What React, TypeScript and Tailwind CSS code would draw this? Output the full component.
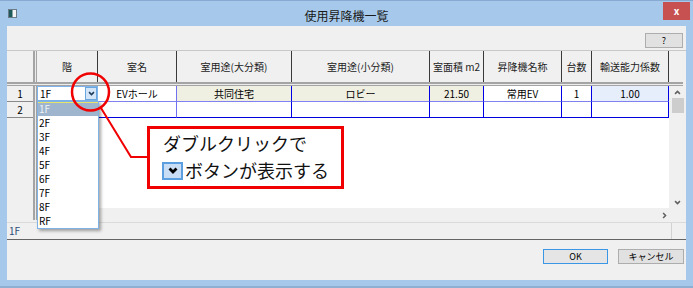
import React from 'react';

const cols = [
  { w: 'w-[61px]', label: '階' },
  { w: 'w-[79px]', label: '室名' },
  { w: 'w-[115px]', label: '室用途(大分類)' },
  { w: 'w-[138px]', label: '室用途(小分類)' },
  { w: 'w-[54px]', label: '室面積 m2' },
  { w: 'w-[78px]', label: '昇降機名称' },
  { w: 'w-[30px]', label: '台数' },
  { w: 'w-[77px]', label: '輸送能力係数' },
];

// row 1 cells after the 階 combo
const row1 = [
  { w: 'w-[79px]', text: 'EVホール', bg: 'bg-white', line: 'border-[#7070f0]' },
  { w: 'w-[115px]', text: '共同住宅', bg: 'bg-[#efefe2]', line: 'border-[#0000e6]' },
  { w: 'w-[138px]', text: 'ロビー', bg: 'bg-[#efefe2]', line: 'border-[#0000e6]' },
  { w: 'w-[54px]', text: '21.50', bg: 'bg-[#efefe2]', line: 'border-[#0000e6]' },
  { w: 'w-[78px]', text: '常用EV', bg: 'bg-white', line: 'border-[#0000e6]' },
  { w: 'w-[30px]', text: '1', bg: 'bg-white', line: 'border-[#0000e6]' },
  { w: 'w-[77px]', text: '1.00', bg: 'bg-[#e6edfb]', line: 'border-[#0000e6]' },
];

const floors = ['2F', '3F', '4F', '5F', '6F', '7F', '8F', 'RF'];

function Chevron({ className, width = 2.2 }: { className?: string; width?: number }) {
  return (
    <svg viewBox="0 0 10 7" className={className}>
      <path d="M1.5 1.5l3.5 3.5 3.5-3.5" fill="none" stroke="currentColor" strokeWidth={width} />
    </svg>
  );
}

function VSplit() {
  return (
    <div className="w-[4px] h-full bg-[#a4a4a4] flex justify-center shrink-0">
      <div className="w-px h-full bg-[#ececec]" />
    </div>
  );
}

function RowHead({ n }: { n: string }) {
  return (
    <div className="w-[26px] shrink-0 bg-[#f0f0f0] border-b border-[#8a8a8a] flex items-center justify-center">
      {n}
    </div>
  );
}

export default function App() {
  return (
    <div className="relative w-[693px] h-[288px] bg-[#a6c9eb] border-t border-[#86aad2] flex flex-col overflow-hidden font-['Noto_Sans_CJK_JP','Noto_Sans',sans-serif] text-black">
      {/* Title bar */}
      <div className="h-[25px] flex items-start shrink-0">
        <div className="w-[30px] pl-[8px] pt-[8px]">
          <svg width="9" height="9" viewBox="0 0 9 9">
            <rect x="0.5" y="0.5" width="8" height="8" fill="#f4f4f4" stroke="#6b7b8a" />
            <rect x="1" y="1" width="3.5" height="7" fill="#1f5a5a" />
          </svg>
        </div>
        <div className="flex-1 text-center text-[12px] leading-[14px] pt-[8px] text-[#1a1a1a]">使用昇降機一覧</div>
        <div className="w-[30px] flex justify-end pr-[3px] pt-[1px]">
          <div className="w-[27px] h-[18px] bg-[#c75050] flex items-center justify-center text-white text-[10px] font-bold leading-none">
            x
          </div>
        </div>
      </div>

      {/* Client area */}
      <div className="mx-[7px] w-[679px] h-[254px] bg-[#f0f0f0] flex flex-col shrink-0 text-[10px]">
        <div className="h-[24px] flex justify-end items-start pt-[7px] pr-[3px]">
          <div className="w-[38px] h-[15px] border border-[#adadad] bg-[#e1e1e1] flex items-center justify-center text-[9px]">
            ?
          </div>
        </div>

        {/* Grid */}
        <div className="relative h-[172px] flex flex-col">
          <div className="flex h-[32px] border-t border-[#c8c8c8]">
            <div className="w-[26px] shrink-0" />
            <VSplit />
            {cols.map((c) => (
              <div key={c.label} className={`${c.w} shrink-0 flex items-center justify-center border-r border-[#3a3a3a] text-[#222]`}>
                {c.label}
              </div>
            ))}
            <div className="flex-1" />
          </div>
          <div className="w-[676px] h-[4px] bg-[#a4a4a4] flex flex-col justify-center">
            <div className="h-px bg-[#ececec]" />
          </div>

          <div className="flex h-[122px]">
            <div className="w-[662px] flex flex-col">
              <div className="flex h-[16px] leading-[15px]">
                <RowHead n="1" />
                <VSplit />
                <div className="w-[61px] shrink-0 border-b border-[#8080f0] flex">
                  <div className="flex-1 border border-[#7eb4ea] bg-white flex items-center">
                    <span className="flex-1 pl-[2px]">1F</span>
                    <div className="w-[12px] h-[13px] bg-[#d3e5f7] border border-[#6aa6e0] flex items-center justify-center text-[#1d3a5c]">
                      <Chevron className="w-[7px] h-[5px]" />
                    </div>
                  </div>
                </div>
                {row1.map((c) => (
                  <div key={c.text} className={`${c.w} ${c.bg} shrink-0 border-r ${c.line} border-b border-b-[#8080f0] text-center`}>
                    {c.text}
                  </div>
                ))}
              </div>
              <div className="flex h-[16px] leading-[15px]">
                <RowHead n="2" />
                <VSplit />
                {cols.map((c, i) => (
                  <div
                    key={c.label}
                    className={`${c.w} shrink-0 bg-white border-b border-b-[#0000e0] border-r ${i < 2 ? 'border-r-[#7070f0]' : 'border-r-[#0000e6]'}`}
                  />
                ))}
              </div>
              <div className="flex flex-1">
                <div className="w-[26px] shrink-0 bg-[#f0f0f0]" />
                <VSplit />
                <div className="flex-1 bg-white" />
              </div>
            </div>
            {/* vertical scroll bar */}
            <div className="w-[17px] flex flex-col bg-[#f0f0f0] text-[#606060]">
              <div className="h-[12px] flex items-center justify-center">
                <Chevron className="w-[7px] h-[5px] rotate-180" />
              </div>
              <div className="ml-[3px] w-[12px] h-[15px] bg-[#cdcdcd]" />
              <div className="flex-1" />
              <div className="h-[12px] flex items-center justify-center">
                <Chevron className="w-[7px] h-[5px]" />
              </div>
            </div>
          </div>

          {/* horizontal scroll bar */}
          <div className="flex h-[14px]">
            <div className="w-[26px] shrink-0" />
            <div className="h-[12px]">
              <VSplit />
            </div>
            <div className="flex-1 flex justify-end items-center pr-[18px] text-[#606060]">
              <Chevron className="w-[7px] h-[5px] -rotate-90" />
            </div>
          </div>

          {/* open drop-down list */}
          <div className="absolute left-[30px] top-[51px] w-[62px] h-[128px] z-10 border border-[#7fb2e5] bg-white shadow-[2px_2px_3px_rgba(0,0,0,0.35)] flex flex-col leading-[14px]">
            <div className="h-[14px] bg-[#9fb4cd] border-t border-[#e9e36a] text-[#eef2f7] leading-[12px] pl-px">1F</div>
            {floors.map((f) => (
              <div key={f} className="h-[14px] pl-px">
                {f}
              </div>
            ))}
          </div>
        </div>

        {/* status bar */}
        <div className="h-[18px] flex border-t border-[#dadada] border-b border-b-[#646464]">
          <div className="w-[664px] pl-[2px] text-[#2c4c78] leading-[16px]">1F</div>
          <div className="flex-1 border-l border-[#d2d2d2]" />
        </div>

        {/* buttons */}
        <div className="flex-1 flex justify-end items-start pt-[9px] pr-[2px] gap-[10px] text-[9px]">
          <div className="w-[65px] h-[15px] border border-[#3c96e6] bg-[#e5e5e5] flex items-center justify-center">OK</div>
          <div className="w-[66px] h-[15px] border border-[#adadad] bg-[#e1e1e1] flex items-center justify-center">キャンセル</div>
        </div>
      </div>

      <div className="flex-1 border-b-2 border-[#8eafd1]" />

      {/* annotation: circle + leader line */}
      <svg className="absolute inset-0 z-20 pointer-events-none" width="693" height="288">
        <circle cx="90.5" cy="91" r="18.5" fill="none" stroke="#f00000" strokeWidth="2.5" />
        <polyline points="101,107 131,156 148,156" fill="none" stroke="#f00000" strokeWidth="2" />
      </svg>

      {/* callout */}
      <div className="absolute left-[147px] top-[125px] w-[197px] h-[63px] z-30 border-[3px] border-[#f00000] bg-white pl-[13px] pt-[1px] text-[18px] leading-[27px] text-[#111]">
        <div>ダブルクリックで</div>
        <div className="flex items-center">
          <span className="-ml-px mr-[2px] w-[21px] h-[18px] bg-[#c9def5] border-2 border-[#5c9fe0] flex items-center justify-center text-black">
            <Chevron className="w-[10px] h-[7px]" width={2.8} />
          </span>
          <span>ボタンが表示する</span>
        </div>
      </div>
    </div>
  );
}
